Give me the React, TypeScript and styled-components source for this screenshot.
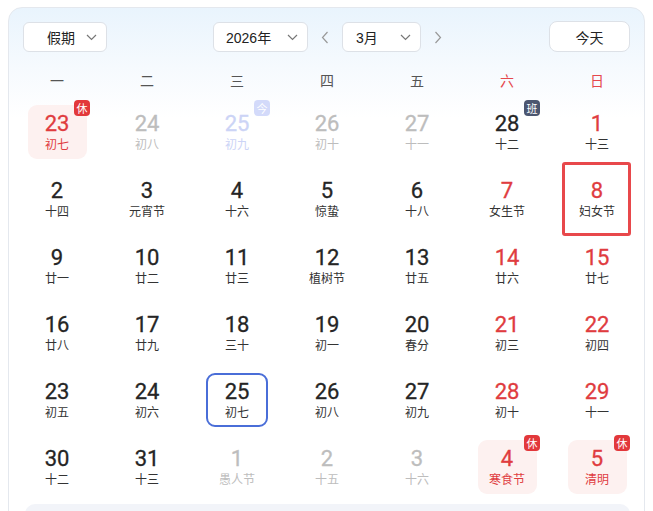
import React from "react";
import styled, { createGlobalStyle, css } from "styled-components";

const Global = createGlobalStyle`
  html, body { margin: 0; padding: 0; background: #fff; }
  body { font-family: Roboto, "Noto Sans CJK SC", sans-serif; }
  * { box-sizing: border-box; }
`;

const Page = styled.div`
  padding: 7px 8px 0 8px;
  height: 511px;
  overflow: hidden;
`;

const Card = styled.div`
  width: 637px;
  height: 540px;
  border: 1px solid #e4e8ee;
  border-radius: 14px;
  background: linear-gradient(180deg, #e9f4fd 0px, #f6fafe 60px, #ffffff 110px);
  padding: 0 3px;
`;

const Toolbar = styled.div`
  display: flex;
  align-items: center;
  height: 44px;
  padding: 14px 11px 0 11px;
`;

const Select = styled.div<{ $w: number; $pl: number }>`
  width: ${(p) => p.$w}px;
  height: 30px;
  border: 1px solid #dde1e7;
  border-radius: 6px;
  background: #fff;
  display: flex;
  align-items: center;
  justify-content: space-between;
  padding: 0 9px 0 ${(p) => p.$pl}px;
  font-size: 14px;
  color: #222;
  font-family: "Liberation Sans", "Noto Sans CJK SC", sans-serif;
`;

const Chevron = () => (
  <svg width="11" height="7" viewBox="0 0 11 7">
    <path d="M1 1l4.5 4.5L10 1" fill="none" stroke="#777" strokeWidth="1.2" />
  </svg>
);

const Arrow = styled.span`
  width: 34px;
  display: flex;
  justify-content: center;
  align-items: center;
`;

const Spacer = styled.div<{ $w?: number }>`
  ${(p) => (p.$w ? css`width: ${p.$w}px;` : css`flex: 1;`)}
`;

const TodayBtn = styled.button`
  width: 81px;
  height: 31px;
  border: 1px solid #dde1e7;
  border-radius: 8px;
  background: #fff;
  font-size: 14px;
  color: #222;
  font-family: "Noto Sans CJK SC", sans-serif;
  padding: 0;
  margin-top: -1px;
`;

const Grid = styled.div`
  display: grid;
  grid-template-columns: repeat(7, 90px);
  grid-auto-rows: 67px;
`;

const Head = styled.div<{ $red?: boolean }>`
  height: 36px;
  margin-top: 10px;
  display: flex;
  align-items: center;
  justify-content: center;
  font-size: 14px;
  color: ${(p) => (p.$red ? "#e5484d" : "#555")};
  font-family: "Noto Sans CJK SC", sans-serif;
`;

const HeadRow = styled.div`
  display: grid;
  grid-template-columns: repeat(7, 90px);
`;

const Cell = styled.div`
  position: relative;
  display: flex;
  align-items: center;
  justify-content: center;
`;

const Box = styled.div<{ $kind: "none" | "holiday" | "today" }>`
  width: ${(p) => (p.$kind === "today" ? 62 : 59)}px;
  height: 54px;
  border-radius: 9px;
  display: flex;
  flex-direction: column;
  align-items: center;
  justify-content: center;
  ${(p) =>
    p.$kind === "holiday" &&
    css`
      background: #fdf1f0;
    `}
  ${(p) =>
    p.$kind === "today" &&
    css`
      border: 2px solid #4a6ed8;
    `}
`;

const Num = styled.div<{ $c: string }>`
  font-size: 22px;
  line-height: 24px;
  font-weight: 400;
  -webkit-text-stroke: 0.3px ${(p) => p.$c};
  color: ${(p) => p.$c};
  font-family: Roboto, sans-serif;
`;

const Lunar = styled.div<{ $c: string }>`
  font-size: 12px;
  line-height: 16px;
  color: ${(p) => p.$c};
  font-family: "Noto Sans CJK SC", sans-serif;
`;

const Badge = styled.span<{ $bg: string }>`
  position: absolute;
  left: calc(50% + 17px);
  top: 2px;
  width: 16px;
  height: 16px;
  border-radius: 4px;
  background: ${(p) => p.$bg};
  color: #fff;
  font-size: 11px;
  line-height: 16px;
  text-align: center;
  font-family: "Noto Sans CJK SC", sans-serif;
`;

const Selected = styled.div`
  position: absolute;
  left: calc(50% - 35px);
  top: -3px;
  width: 69px;
  height: 74px;
  border: 3px solid #e8484b;
  border-radius: 3px;
  pointer-events: none;
`;

const Footer = styled.div`
  margin: 4px 11px 0 13px;
  height: 40px;
  border-radius: 10px;
  background: #f2f4f9;
`;

type Day = {
  d: number;
  l: string;
  k?: "other" | "blue" | "red" | "holiday";
  badge?: "休" | "班" | "今";
  today?: boolean;
  sel?: boolean;
};

const rows: Day[][] = [
  [
    { d: 23, l: "初七", k: "holiday", badge: "休" },
    { d: 24, l: "初八", k: "other" },
    { d: 25, l: "初九", k: "blue", badge: "今" },
    { d: 26, l: "初十", k: "other" },
    { d: 27, l: "十一", k: "other" },
    { d: 28, l: "十二", badge: "班" },
    { d: 1, l: "十三", k: "red" },
  ],
  [
    { d: 2, l: "十四" },
    { d: 3, l: "元宵节" },
    { d: 4, l: "十六" },
    { d: 5, l: "惊蛰" },
    { d: 6, l: "十八" },
    { d: 7, l: "女生节", k: "red" },
    { d: 8, l: "妇女节", k: "red", sel: true },
  ],
  [
    { d: 9, l: "廿一" },
    { d: 10, l: "廿二" },
    { d: 11, l: "廿三" },
    { d: 12, l: "植树节" },
    { d: 13, l: "廿五" },
    { d: 14, l: "廿六", k: "red" },
    { d: 15, l: "廿七", k: "red" },
  ],
  [
    { d: 16, l: "廿八" },
    { d: 17, l: "廿九" },
    { d: 18, l: "三十" },
    { d: 19, l: "初一" },
    { d: 20, l: "春分" },
    { d: 21, l: "初三", k: "red" },
    { d: 22, l: "初四", k: "red" },
  ],
  [
    { d: 23, l: "初五" },
    { d: 24, l: "初六" },
    { d: 25, l: "初七", today: true },
    { d: 26, l: "初八" },
    { d: 27, l: "初九" },
    { d: 28, l: "初十", k: "red" },
    { d: 29, l: "十一", k: "red" },
  ],
  [
    { d: 30, l: "十二" },
    { d: 31, l: "十三" },
    { d: 1, l: "愚人节", k: "other" },
    { d: 2, l: "十五", k: "other" },
    { d: 3, l: "十六", k: "other" },
    { d: 4, l: "寒食节", k: "holiday", badge: "休" },
    { d: 5, l: "清明", k: "holiday", badge: "休" },
  ],
];

const numColor = (k?: Day["k"]) =>
  k === "other" ? "#bdbdbd" : k === "blue" ? "#ccd4f6" : k === "red" || k === "holiday" ? "#e03c3f" : "#252525";
const lunarColor = (k?: Day["k"]) =>
  k === "other" ? "#bdbdbd" : k === "blue" ? "#ccd4f6" : k === "holiday" ? "#e03c3f" : "#333";
const badgeColor = (b: string) => (b === "休" ? "#e2383b" : b === "班" ? "#4b5670" : "#d3dafa");

const weekdays = ["一", "二", "三", "四", "五", "六", "日"];

export default function App() {
  return (
    <>
      <Global />
      <Page>
        <Card>
          <Toolbar>
            <Select $w={84} $pl={23}>
              <span>假期</span>
              <Chevron />
            </Select>
            <Spacer />
            <Select $w={95} $pl={12}>
              <span>2026年</span>
              <Chevron />
            </Select>
            <Arrow>
              <svg width="8" height="13" viewBox="0 0 8 13">
                <path d="M6.5 1L1.5 6.5l5 5.5" fill="none" stroke="#999" strokeWidth="1.2" />
              </svg>
            </Arrow>
            <Select $w={79} $pl={13}>
              <span>3月</span>
              <Chevron />
            </Select>
            <Arrow>
              <svg width="8" height="13" viewBox="0 0 8 13">
                <path d="M1.5 1l5 5.5-5 5.5" fill="none" stroke="#999" strokeWidth="1.2" />
              </svg>
            </Arrow>
            <Spacer $w={94} />
            <TodayBtn>今天</TodayBtn>
          </Toolbar>
          <HeadRow>
            {weekdays.map((w, i) => (
              <Head key={w} $red={i >= 5}>
                {w}
              </Head>
            ))}
          </HeadRow>
          <Grid>
            {rows.flat().map((c, i) => (
              <Cell key={i}>
                <Box $kind={c.k === "holiday" ? "holiday" : c.today ? "today" : "none"}>
                  <Num $c={numColor(c.k)}>{c.d}</Num>
                  <Lunar $c={lunarColor(c.k)}>{c.l}</Lunar>
                </Box>
                {c.badge && <Badge $bg={badgeColor(c.badge)}>{c.badge}</Badge>}
                {c.sel && <Selected />}
              </Cell>
            ))}
          </Grid>
          <Footer />
        </Card>
      </Page>
    </>
  );
}
